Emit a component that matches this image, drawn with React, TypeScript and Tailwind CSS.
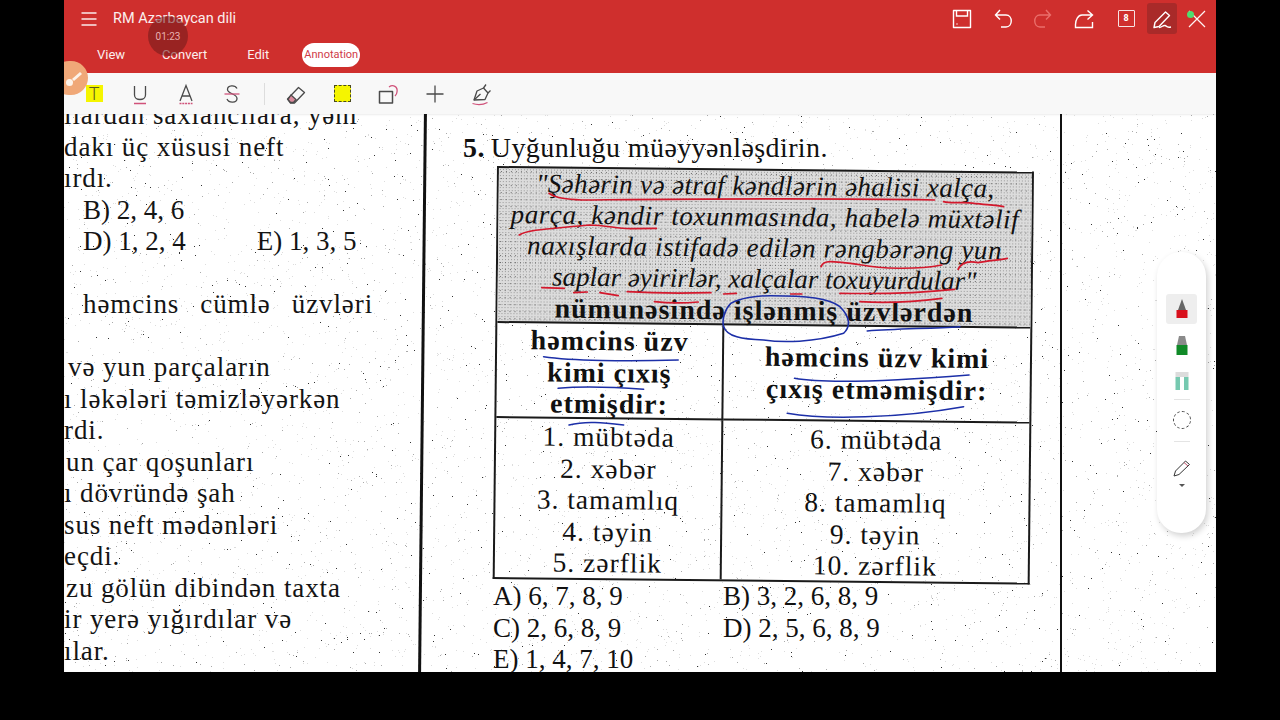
// Annotation screen of a PDF reader, with a scanned exam page underneath.
const serif = "font-['Liberation_Serif',serif]";

const LEFT_LINES = [
  { text: 'ılardan saxlancılara, yəni', pad: 'pl-0' },
  { text: 'dakı üç xüsusi neft', pad: 'pl-0' },
  { text: 'ırdı.', pad: 'pl-0' },
  { text: 'B) 2, 4, 6', pad: 'pl-[19px] tracking-normal' },
  { text: 'D) 1, 2, 4', pad: 'pl-[19px] tracking-normal', extra: 'E) 1, 3, 5' },
  { text: '', pad: 'pl-0' },
  { text: 'həmcins', pad: 'pl-[19px]', words: ['cümlə', 'üzvləri'] },
  { text: '', pad: 'pl-0' },
  { text: 'və yun parçaların', pad: 'pl-[4px]' },
  { text: 'ı ləkələri təmizləyərkən', pad: 'pl-0' },
  { text: 'rdi.', pad: 'pl-0' },
  { text: 'un çar qoşunları', pad: 'pl-[2px]' },
  { text: 'ı dövründə şah', pad: 'pl-0' },
  { text: 'sus neft mədənləri', pad: 'pl-0' },
  { text: 'eçdi.', pad: 'pl-0' },
  { text: 'zu gölün dibindən taxta', pad: 'pl-[2px]' },
  { text: 'ir yerə yığırdılar və', pad: 'pl-0' },
  { text: 'ılar.', pad: 'pl-0' },
];

const SUBJECTS_LEFT = ['1. mübtəda', '2. xəbər', '3. tamamlıq', '4. təyin', '5. zərflik'];
const SUBJECTS_RIGHT = ['6. mübtəda', '7. xəbər', '8. tamamlıq', '9. təyin', '10. zərflik'];

// pen strokes, in the coordinates of the enlarged crop (2.75x wide, 3x high)
const RED_INK = [
  'M190 190 C210 205 240 208 280 210 C500 208 900 203 1250 210',
  'M1275 215 C1300 222 1330 214 1360 220 C1390 224 1420 226 1440 230',
  'M108 315 C130 298 200 296 300 285 C350 285 380 298 420 296 L485 295',
  'M938 410 C945 390 960 392 1050 405 C1100 416 1200 420 1270 405',
  'M1315 418 C1325 395 1345 392 1370 398 C1400 392 1430 390 1450 385',
  'M170 473 L232 475',
  'M258 488 L295 486',
  'M330 488 L380 497',
  'M405 485 C480 490 560 490 635 488',
  'M670 492 L705 490',
  'M855 492 L885 492',
  'M990 490 C1100 492 1220 488 1305 478',
  'M480 515 C520 520 560 520 600 516',
  'M1045 515 C1120 520 1200 515 1270 505',
];
const BLUE_INK = [
  'M690 520 C672 540 665 570 670 590 C680 620 720 628 780 630 C830 638 920 638 1000 610 C1020 590 1018 560 990 530 C960 505 900 497 800 497 C760 497 715 505 690 520',
  'M1065 603 C1150 596 1240 596 1320 590',
  'M175 680 C250 692 400 695 545 690',
  'M215 775 C260 770 330 768 450 778',
  'M865 745 C950 762 1150 752 1345 735',
  'M845 850 C950 870 1150 865 1330 830',
  'M245 885 C290 872 340 878 395 885',
];

function speckle(count: number, seed: number) {
  let s = seed;
  const next = () => {
    s = (s * 16807) % 2147483647;
    return s / 2147483647;
  };
  let d = '';
  for (let i = 0; i < count; i++) {
    d += `M${Math.floor(next() * 1152)} ${Math.floor(next() * 558)}h1v1h-1z`;
  }
  return d;
}

const DARK_DOTS = speckle(800, 4711);
const MID_DOTS = speckle(1500, 90211);
const PALE_DOTS = speckle(5000, 33331);

function HeaderIcon({ children, className = '' }: { children: React.ReactNode; className?: string }) {
  return (
    <div className={`flex h-[30px] w-[30px] items-center justify-center ${className}`}>
      <svg width="24" height="24" viewBox="0 0 24 24" fill="none" stroke="currentColor" strokeWidth="1.4">
        {children}
      </svg>
    </div>
  );
}

function ToolIcon({ children }: { children: React.ReactNode }) {
  return (
    <div className="flex h-[24px] w-[46px] items-center justify-center text-[#4a4a4a]">
      <svg width="24" height="24" viewBox="0 0 24 24" fill="none" stroke="currentColor" strokeWidth="1.3">
        {children}
      </svg>
    </div>
  );
}

function Header() {
  return (
    <div className="flex h-[73px] shrink-0 flex-col bg-[#cf2f2d] font-['Roboto',sans-serif] text-white">
      <div className="flex h-[37px] items-center">
        <svg className="ml-[17px]" width="16" height="16" viewBox="0 0 16 16" stroke="#fbeaea" strokeWidth="1.4">
          <path d="M0.5 2H15.5M0.5 8H15.5M0.5 14H15.5" />
        </svg>
        <span className="ml-[16px] text-[14.5px] text-[#fbeeee]">RM Azərbaycan dili</span>
        <div className="ml-auto mr-[4px] flex items-center">
          <HeaderIcon>
            <path d="M3.5 3.5H20.5V20.5H3.5Z" strokeLinejoin="round" />
            <path d="M6.5 3.5V9H17.5V3.5M6.5 17H7.5" />
          </HeaderIcon>
          <HeaderIcon className="ml-[11px]">
            <path d="M9 3L4.5 8L9 12.5M4.5 8H15C22 8 22 20 15 20H10" />
          </HeaderIcon>
          <HeaderIcon className="ml-[10px] text-[#ea6f6b]">
            <path d="M15 3L19.5 8L15 12.5M19.5 8H9C2 8 2 20 9 20H14" />
          </HeaderIcon>
          <HeaderIcon className="ml-[11px]">
            <path d="M15.5 3.5L20.5 8L15.5 12.5M20.5 8H10C6 8 3.5 13 3.5 17.5V20.5H20.5V15" />
          </HeaderIcon>
          <div className="relative ml-[12px] flex h-[30px] w-[30px] items-center justify-center">
            <div className="flex h-[17px] w-[17px] items-center justify-center rounded-[1px] border-[1.5px] border-[#f6e3e3] text-[9px] font-bold">
              8
            </div>
          </div>
          <div className="ml-[6px] flex h-[31px] w-[30px] items-center justify-center rounded-[3px] bg-[#a92a29]">
            <svg width="24" height="24" viewBox="0 0 24 24" fill="none" stroke="currentColor" strokeWidth="1.4">
              <path d="M4 20.5L5 15.5L15.5 5L19.5 8.5L9 19.5Z" strokeLinejoin="round" />
              <path d="M9 20.5C12 20.5 13 18 15 18.5C17 19 16 21 21 20" />
            </svg>
          </div>
          <div className="relative ml-[5px] flex h-[30px] w-[30px] items-center justify-center">
            <svg width="18" height="18" viewBox="0 0 18 18" stroke="#fff4f4" strokeWidth="1.2">
              <path d="M1 1L17 17M17 1L1 17" />
            </svg>
            <div className="absolute left-[5px] top-[7px] h-[7px] w-[7px] rounded-full bg-[#4fdc6e]" />
          </div>
        </div>
      </div>
      <div className="flex h-[36px] items-start text-[13px] text-[#fbeeee]">
        <div className="ml-[33px] mt-[6px] flex h-[24px] items-center">View</div>
        <div className="ml-[37px] mt-[6px] flex h-[24px] items-center">Convert</div>
        <div className="ml-[40px] mt-[6px] flex h-[24px] items-center">Edit</div>
        <div className="ml-[33px] mt-[6px] flex h-[24px] w-[58px] items-center justify-center rounded-full bg-white text-[11px] text-[#cf3a48]">
          Annotation
        </div>
      </div>
    </div>
  );
}

function Toolbar() {
  return (
    <div className="flex h-[41px] shrink-0 items-center bg-[#f8f8f8] pl-[7px]">
      <div className="flex h-[24px] w-[46px] items-center justify-center">
        <div className="flex h-[17px] w-[17px] items-center justify-center bg-[#f5f500] font-['Roboto',sans-serif] text-[18px] font-light leading-none text-[#5a5a20]">
          T
        </div>
      </div>
      <ToolIcon>
        <path d="M6.5 4V13C6.5 19 17.5 19 17.5 13V4" />
        <path d="M6 21.5H18" stroke="#d0527a" strokeWidth="1.5" />
      </ToolIcon>
      <ToolIcon>
        <path d="M6 19L12 3.5L18 19M8 14H16" />
        <path d="M5.5 21.5H18.5" stroke="#d0527a" strokeWidth="1.5" strokeDasharray="2 0.8" />
      </ToolIcon>
      <ToolIcon>
        <path d="M17 6.5C15 2.5 7.5 3 7.5 7.5C7.5 12 17 11.5 17 16.5C17 21 9 21.5 7 17" />
        <path d="M4.5 12H19.5" stroke="#d0527a" strokeWidth="1.3" />
      </ToolIcon>
      <div className="ml-[9px] h-[22px] w-px bg-[#dddddd]" />
      <div className="ml-[8px]">
        <ToolIcon>
          <path d="M3.5 17L14.5 5.5L20.5 10.5L10.5 21H6.5Z" strokeLinejoin="round" />
          <path d="M4 17.5L7 13L12 17.5L9.5 20.5H6.5Z" fill="#d98a9c" stroke="#4a4a4a" />
        </ToolIcon>
      </div>
      <div className="flex h-[24px] w-[46px] items-center justify-center">
        <div className="h-[17px] w-[17px] border border-dashed border-[#4a4a20] bg-[#f5f500]" />
      </div>
      <ToolIcon>
        <path d="M3.5 9.5H16.5V21H3.5Z" strokeLinejoin="round" strokeWidth="1.5" />
        <path d="M13 5C17 2 22 4.5 21 10C20.8 12 20 13 19 14" stroke="#d0527a" />
      </ToolIcon>
      <div className="ml-px">
        <ToolIcon>
          <path d="M3.5 12H20.5M12 3.5V20.5" />
        </ToolIcon>
      </div>
      <ToolIcon>
        <path d="M5 18L8 9L14.5 6L19 11L16 17.5Z" strokeLinejoin="round" />
        <path d="M5 18L11.5 12M14.5 6L17 2.5M19 11L21.5 8.5" />
        <path d="M3.5 21.5C8 23 14 22.8 18.5 20.5" stroke="#d0527a" />
      </ToolIcon>
    </div>
  );
}

function LeftColumn() {
  return (
    <div className={`relative w-[357px] shrink-0 overflow-hidden ${serif} text-[#141414]`}>
      <div className="-mt-[14px] whitespace-nowrap text-[27px] leading-[31.5px] tracking-[0.9px]">
        {LEFT_LINES.map((line, i) => (
          <div key={i} className={`flex h-[31.5px] ${line.pad}`}>
            <span>{line.text}</span>
            {line.extra && <span className="ml-[71px]">{line.extra}</span>}
            {line.words?.map((w) => (
              <span key={w} className="ml-[21px]">
                {w}
              </span>
            ))}
          </div>
        ))}
      </div>
    </div>
  );
}

function QuestionTable() {
  return (
    <div className="ml-[73px] mt-[4px] w-[537px] origin-top-left rotate-[0.6deg] border-x-2 border-b-2 border-[#1a1a1a] text-center text-[27.5px] leading-[31.5px] tracking-[1px] text-[#111]">
      <div className="h-[157px] border-y-2 border-[#1a1a1a] bg-[#dcdcdc] bg-[radial-gradient(#666_0.6px,transparent_0.7px),radial-gradient(#999_0.6px,transparent_0.7px)] bg-[length:5px_7px,3px_3px] leading-[31px]">
        <div className="whitespace-nowrap text-[27px] italic tracking-[0.6px]">
          <div className="tracking-[0.4px]">"Şəhərin və ətraf kəndlərin əhalisi xalça,</div>
          <div>parça, kəndir toxunmasında, habelə müxtəlif</div>
          <div>naxışlarda istifadə edilən rəngbərəng yun</div>
          <div className="tracking-normal">saplar əyirirlər, xalçalar toxuyurdular"</div>
        </div>
        <div className="whitespace-nowrap text-[28px] font-bold">nümunəsində işlənmiş üzvlərdən</div>
      </div>
      <div className="grid grid-cols-[227px_1fr]">
        <div className="h-[95px] border-b-2 border-r-2 border-[#1a1a1a] pt-[1px] text-[28px] font-bold">
          <div>həmcins üzv</div>
          <div>kimi çıxış</div>
          <div>etmişdir:</div>
        </div>
        <div className="flex h-[95px] flex-col justify-center border-b-2 border-[#1a1a1a] text-[28px] font-bold">
          <div>həmcins üzv kimi</div>
          <div>çıxış etməmişdir:</div>
        </div>
        <div className="h-[159px] border-r-2 border-[#1a1a1a] pt-[2px]">
          {SUBJECTS_LEFT.map((s) => (
            <div key={s}>{s}</div>
          ))}
        </div>
        <div className="h-[159px] pt-[2px]">
          {SUBJECTS_RIGHT.map((s) => (
            <div key={s}>{s}</div>
          ))}
        </div>
      </div>
    </div>
  );
}

function MiddleColumn() {
  return (
    <div className={`relative w-[636px] shrink-0 ${serif} text-[#111]`}>
      <div className="flex h-[48px] items-end whitespace-nowrap pl-[39px] text-[28px] leading-[32px] tracking-[0.4px]">
        <span className="relative top-[2px] mr-[6px] font-bold">5.</span>
        <span className="relative top-[2px]">Uyğunluğu müəyyənləşdirin.</span>
      </div>
      <QuestionTable />
      <div className="ml-[69px] mt-[2px] grid grid-cols-[230px_1fr] text-[27px] leading-[31.5px]">
        <div>A) 6, 7, 8, 9</div>
        <div>B) 3, 2, 6, 8, 9</div>
        <div>C) 2, 6, 8, 9</div>
        <div>D) 2, 5, 6, 8, 9</div>
        <div>E) 1, 4, 7, 10</div>
      </div>
    </div>
  );
}

function FloatingPalette() {
  return (
    <div className="absolute left-[1093px] top-[138px] flex h-[281px] w-[49px] flex-col items-center rounded-[24px] bg-white pt-[42px] shadow-[2px_3px_6px_rgba(0,0,0,0.18)]">
      <div className="flex h-[30px] w-[31px] items-center justify-center rounded-[3px] bg-[#eeeeee]">
        <svg width="14" height="22" viewBox="0 0 14 22">
          <path d="M7 1L11 12H3Z" fill="#666666" />
          <rect x="1.5" y="12" width="11" height="8" fill="#d8101c" />
        </svg>
      </div>
      <svg className="mt-[11px]" width="14" height="22" viewBox="0 0 14 22">
        <path d="M4 1H10L12 10H2Z" fill="#8a8a8a" />
        <rect x="1.5" y="10" width="11" height="10" fill="#108a28" />
      </svg>
      <svg className="mt-[14px]" width="14" height="20" viewBox="0 0 14 20">
        <rect x="0.5" y="1" width="13" height="5" fill="#dcdcdc" />
        <rect x="0.5" y="6" width="4.5" height="13" fill="#76c9b0" />
        <rect x="9" y="6" width="4.5" height="13" fill="#76c9b0" />
      </svg>
      <div className="mt-[8px] h-px w-[16px] bg-[#e4e4e4]" />
      <div className="mt-[11px] h-[18px] w-[18px] rounded-full border-[1.5px] border-dashed border-[#444]" />
      <div className="mt-[12px] h-px w-[16px] bg-[#e4e4e4]" />
      <svg className="mt-[17px]" width="18" height="18" viewBox="0 0 18 18" fill="none" stroke="#333" strokeWidth="1">
        <path d="M1 17L2.5 12L12.5 2L16.5 5.5L6 15.5Z" strokeLinejoin="round" />
        <path d="M11 3.5L15 7" stroke="#c0526a" />
      </svg>
      <div className="mt-[7px] h-0 w-0 border-x-[3px] border-t-[3px] border-x-transparent border-t-[#555]" />
    </div>
  );
}

export default function App() {
  return (
    <div className="h-[720px] w-[1280px] overflow-hidden bg-black">
      <div className="relative mx-auto flex h-[672px] w-[1152px] flex-col overflow-hidden">
        <Header />
        <Toolbar />
        <div className="relative flex min-h-0 flex-1 overflow-hidden bg-white shadow-[inset_0_1px_2px_rgba(0,0,0,0.08)]">
          <svg className="absolute inset-0" width="1152" height="558">
            <path d={PALE_DOTS} fill="#dddddd" />
            <path d={MID_DOTS} fill="#aaaaaa" />
            <path d={DARK_DOTS} fill="#333333" />
          </svg>
          <LeftColumn />
          <div className="relative h-full w-[3px] shrink-0 rotate-[0.6deg] bg-[#111]" />
          <MiddleColumn />
          <div className="relative h-full w-[2px] shrink-0 bg-[#111]" />
          <svg className="absolute inset-0" width="1152" height="558" fill="none" strokeLinecap="round">
            <g transform="translate(416 16) scale(0.3636 0.3333)">
              {RED_INK.map((d) => (
                <path key={d} d={d} stroke="#d3182c" strokeWidth="5" />
              ))}
              {BLUE_INK.map((d) => (
                <path key={d} d={d} stroke="#1c2fa8" strokeWidth="4.5" />
              ))}
            </g>
          </svg>
          <FloatingPalette />
        </div>
        {/* screen-recorder timer bubble and brush button lie over the header */}
        <div className="absolute left-[84px] top-[16px] flex h-[40px] w-[40px] items-center justify-center rounded-full bg-[#6e1a1a]/55 font-['Roboto',sans-serif] text-[10px] text-[#e8b0b0]">
          01:23
        </div>
        <div className="absolute left-[-12px] top-[61px] flex h-[34px] w-[36px] items-center justify-center rounded-full bg-[#f0a878]">
          <svg className="ml-[8px]" width="20" height="20" viewBox="0 0 20 20" fill="#fdf3ea">
            <path d="M8 11L16 4L18 6L10 13Z" />
            <circle cx="5.5" cy="14.5" r="3.5" />
          </svg>
        </div>
      </div>
    </div>
  );
}
